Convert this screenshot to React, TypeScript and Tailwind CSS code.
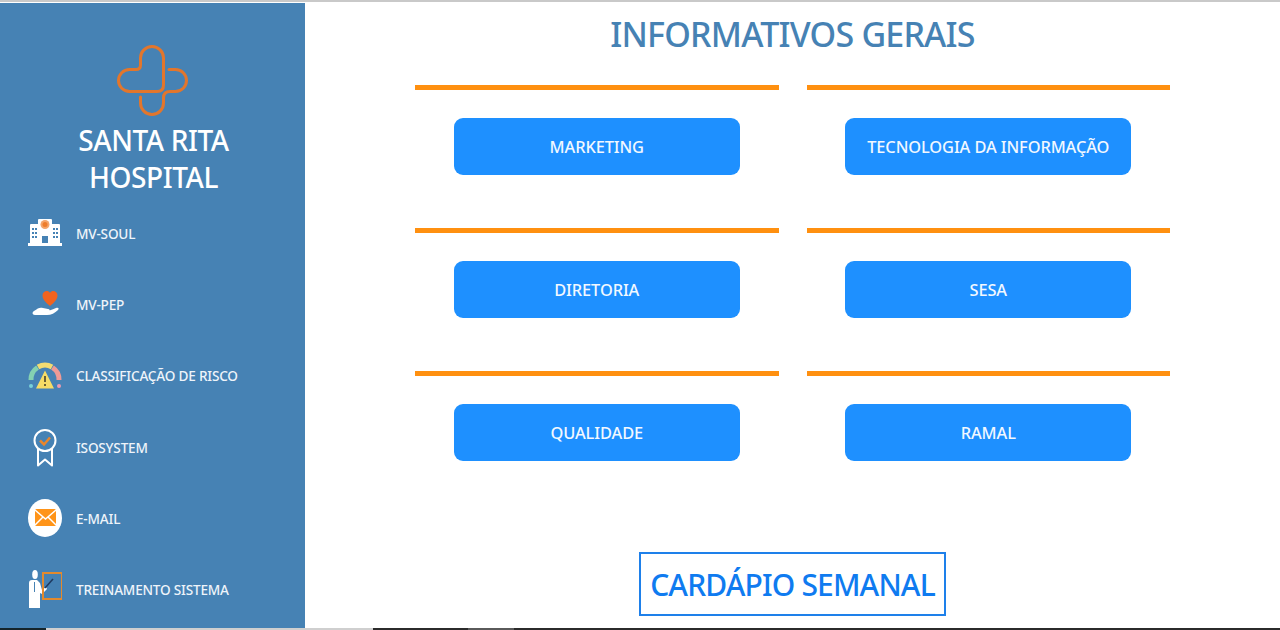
const INFORMATIVOS = ['MARKETING', 'TECNOLOGIA DA INFORMAÇÃO', 'DIRETORIA', 'SESA', 'QUALIDADE', 'RAMAL'];

function IconeLogo() {
  return (
    <svg width="72" height="72" viewBox="0 0 72 72" fill="none" stroke="#e2762c" strokeWidth="3" strokeLinecap="round" strokeLinejoin="round">
      <path d="M12.500 24.500H19Q23.500 24.500 23.500 20V13A11.500 11.500 0 0 1 46.500 13V40Q46.500 46.500 40 46.500H12.500A11 11 0 0 1 12.500 24.500" />
      <path d="M52 24.500H58.500A11 11 0 0 1 58.500 46.500H53Q46.500 46.500 46.500 53V58A11.500 11.500 0 0 1 23.500 58V52" />
    </svg>
  );
}

function IconeHospital() {
  return (
    <svg width="34" height="30" viewBox="0 0 34 30">
      <path fill="#fff" d="M10 1q0-1 1-1h12q1 0 1 1v4h7q1 0 1 1v18h2v3H0v-3h2V6q0-1 1-1h7z" />
      <circle cx="17" cy="5.500" r="4.500" fill="#f4a56a" />
      <circle cx="17" cy="5.500" r="2.500" fill="#ee7d2b" />
      <rect x="14" y="17" width="6" height="7" fill="#4682b4" />
      <path fill="#4682b4" d="M4 9h2v2H4zm3 0h2v2H7zm-3 4h2v2H4zm3 0h2v2H7zm-3 4h2v2H4zm3 0h2v2H7zm18-8h2v2h-2zm3 0h2v2h-2zm-3 4h2v2h-2zm3 0h2v2h-2zm-3 4h2v2h-2zm3 0h2v2h-2z" />
    </svg>
  );
}

function IconePep() {
  return (
    <svg width="34" height="30" viewBox="0 0 34 30">
      <path fill="#f2631f" d="M22 16C17 12 14.500 9 14.500 5.500C14.500 1 20 -.5 22 3C24 -.5 29.500 1 29.500 5.500C29.500 9 27 12 22 16z" />
      <path fill="#fff" d="M7 25c-3 0-3-3-1-4 4-3 6-4 9-3l5 1c2 0 2 2 0 2h-3c3 0 7-1 11-3 3-1 3 1 2 2-3 3-7 5-11 5z" />
    </svg>
  );
}

function IconeRisco() {
  return (
    <svg width="34" height="30" viewBox="0 0 34 30" fill="none" strokeWidth="5">
      <path d="M3 19A14.500 14.500 0 0 1 9.500 6.500" stroke="#84d2b2" />
      <path d="M10 6A14.500 14.500 0 0 1 24 6" stroke="#f3dc72" />
      <path d="M24.500 6.500A14.500 14.500 0 0 1 31 19" stroke="#ee9a96" />
      <circle cx="3" cy="25" r="2" fill="#79d0d8" />
      <circle cx="31" cy="25" r="2" fill="#ee9ab0" />
      <path d="M17 9.500L26 27.500H8z" fill="#f6dc66" stroke="none" />
      <path d="M17 15v6m0 2v2" stroke="#5b5330" strokeWidth="1.800" />
    </svg>
  );
}

function IconeIso() {
  return (
    <svg width="24" height="38" viewBox="0 0 24 38" fill="none" stroke="#fff" strokeWidth="2">
      <circle cx="12" cy="11.500" r="10.500" />
      <path d="M5 20V36.500l7-6 7 6V20" strokeLinejoin="round" />
      <path d="M7 11.500l4 4 6-7" stroke="#ea862c" strokeWidth="2.500" />
    </svg>
  );
}

function IconeEmail() {
  return (
    <svg width="34" height="40" viewBox="0 0 34 40">
      <ellipse cx="17" cy="19" rx="17" ry="19" fill="#fff" />
      <rect x="7" y="10" width="21" height="17" rx="1.500" fill="#ff9418" />
      <path d="M7 11l10.500 9L28 11M7 26l8-8m13 8l-8-8" fill="none" stroke="#fff" strokeWidth="1.500" />
    </svg>
  );
}

function IconeTreinamento() {
  return (
    <svg width="34" height="42" viewBox="0 0 34 42">
      <ellipse cx="7" cy="4.500" rx="2.800" ry="4.500" fill="#fff" />
      <path fill="#fff" d="M1 13q0-3 3-3h5l3 3 2 7 4-3 1 2-5 5-2-1v15H1z" />
      <path d="M6.500 12v10" stroke="#4682b4" strokeWidth="1" />
      <rect x="15" y="3" width="19" height="26" fill="none" stroke="#e38a2d" strokeWidth="2" />
      <path d="M17 18l8-9" stroke="#1f3a60" strokeWidth="1.500" />
    </svg>
  );
}

const MENU = [
  { nome: 'MV-SOUL', Icone: IconeHospital },
  { nome: 'MV-PEP', Icone: IconePep },
  { nome: 'CLASSIFICAÇÃO DE RISCO', Icone: IconeRisco },
  { nome: 'ISOSYSTEM', Icone: IconeIso },
  { nome: 'E-MAIL', Icone: IconeEmail },
  { nome: 'TREINAMENTO SISTEMA', Icone: IconeTreinamento },
];

export default function App() {
  return (
    <div className="flex h-[630px] w-[1280px] flex-col overflow-hidden bg-white font-['Noto_Sans','Open_Sans',sans-serif]">
      <div className="h-[3px] border-t-2 border-[#c9c9c9] bg-white" />
      <div className="flex flex-1">
        <aside className="flex w-[305px] flex-col bg-[#4682b4]">
          <div className="flex justify-center pt-[42px]">
            <IconeLogo />
          </div>
          <h1 className="mt-[5px] pl-[2px] text-center text-[28px] leading-[37px] font-medium tracking-[-0.4px] text-white">
            SANTA RITA
            <br />
            HOSPITAL
          </h1>
          <nav className="mt-[2px] flex flex-col pl-[28px]">
            {MENU.map(({ nome, Icone }) => (
              <a key={nome} className="flex h-[71.400px] items-center">
                <span className="flex w-[48px] justify-center pr-[14px]">
                  <Icone />
                </span>
                <span className="text-[13.600px] font-medium tracking-[-0.2px] text-[#eef4fa]">{nome}</span>
              </a>
            ))}
          </nav>
        </aside>
        <main className="flex flex-1 flex-col items-center">
          <h2 className="mt-[9px] text-[34px] leading-[44px] font-medium tracking-[-0.8px] text-[#4682b4]">INFORMATIVOS GERAIS</h2>
          <div className="mt-[29px] grid w-[755px] grid-cols-2 gap-x-[28px]">
            {INFORMATIVOS.map((titulo) => (
              <section key={titulo} className="h-[143px] border-t-[5px] border-[#ff9010] pt-[28px]">
                <a className="mx-auto flex h-[57px] w-[286px] items-center justify-center rounded-[9px] bg-[#1e90ff] pt-[1px] text-[16.400px] font-medium tracking-[-0.1px] text-[#f2f8ff]">
                  {titulo}
                </a>
              </section>
            ))}
          </div>
          <a className="mt-[38px] flex h-[64px] w-[307px] items-center justify-center border-2 border-[#1e80ea] text-[30px] font-medium tracking-[-0.85px] text-[#0f7bf0]">
            CARDÁPIO SEMANAL
          </a>
        </main>
      </div>
      <div className="flex h-[2px] bg-[#2b2b2b]">
        <div className="w-[46px] bg-[#15252b]" />
        <div className="w-[327px] bg-[#cfcfcf]" />
        <div className="w-[95px]" />
        <div className="w-[46px] bg-[#5a5a5a]" />
      </div>
    </div>
  );
}
